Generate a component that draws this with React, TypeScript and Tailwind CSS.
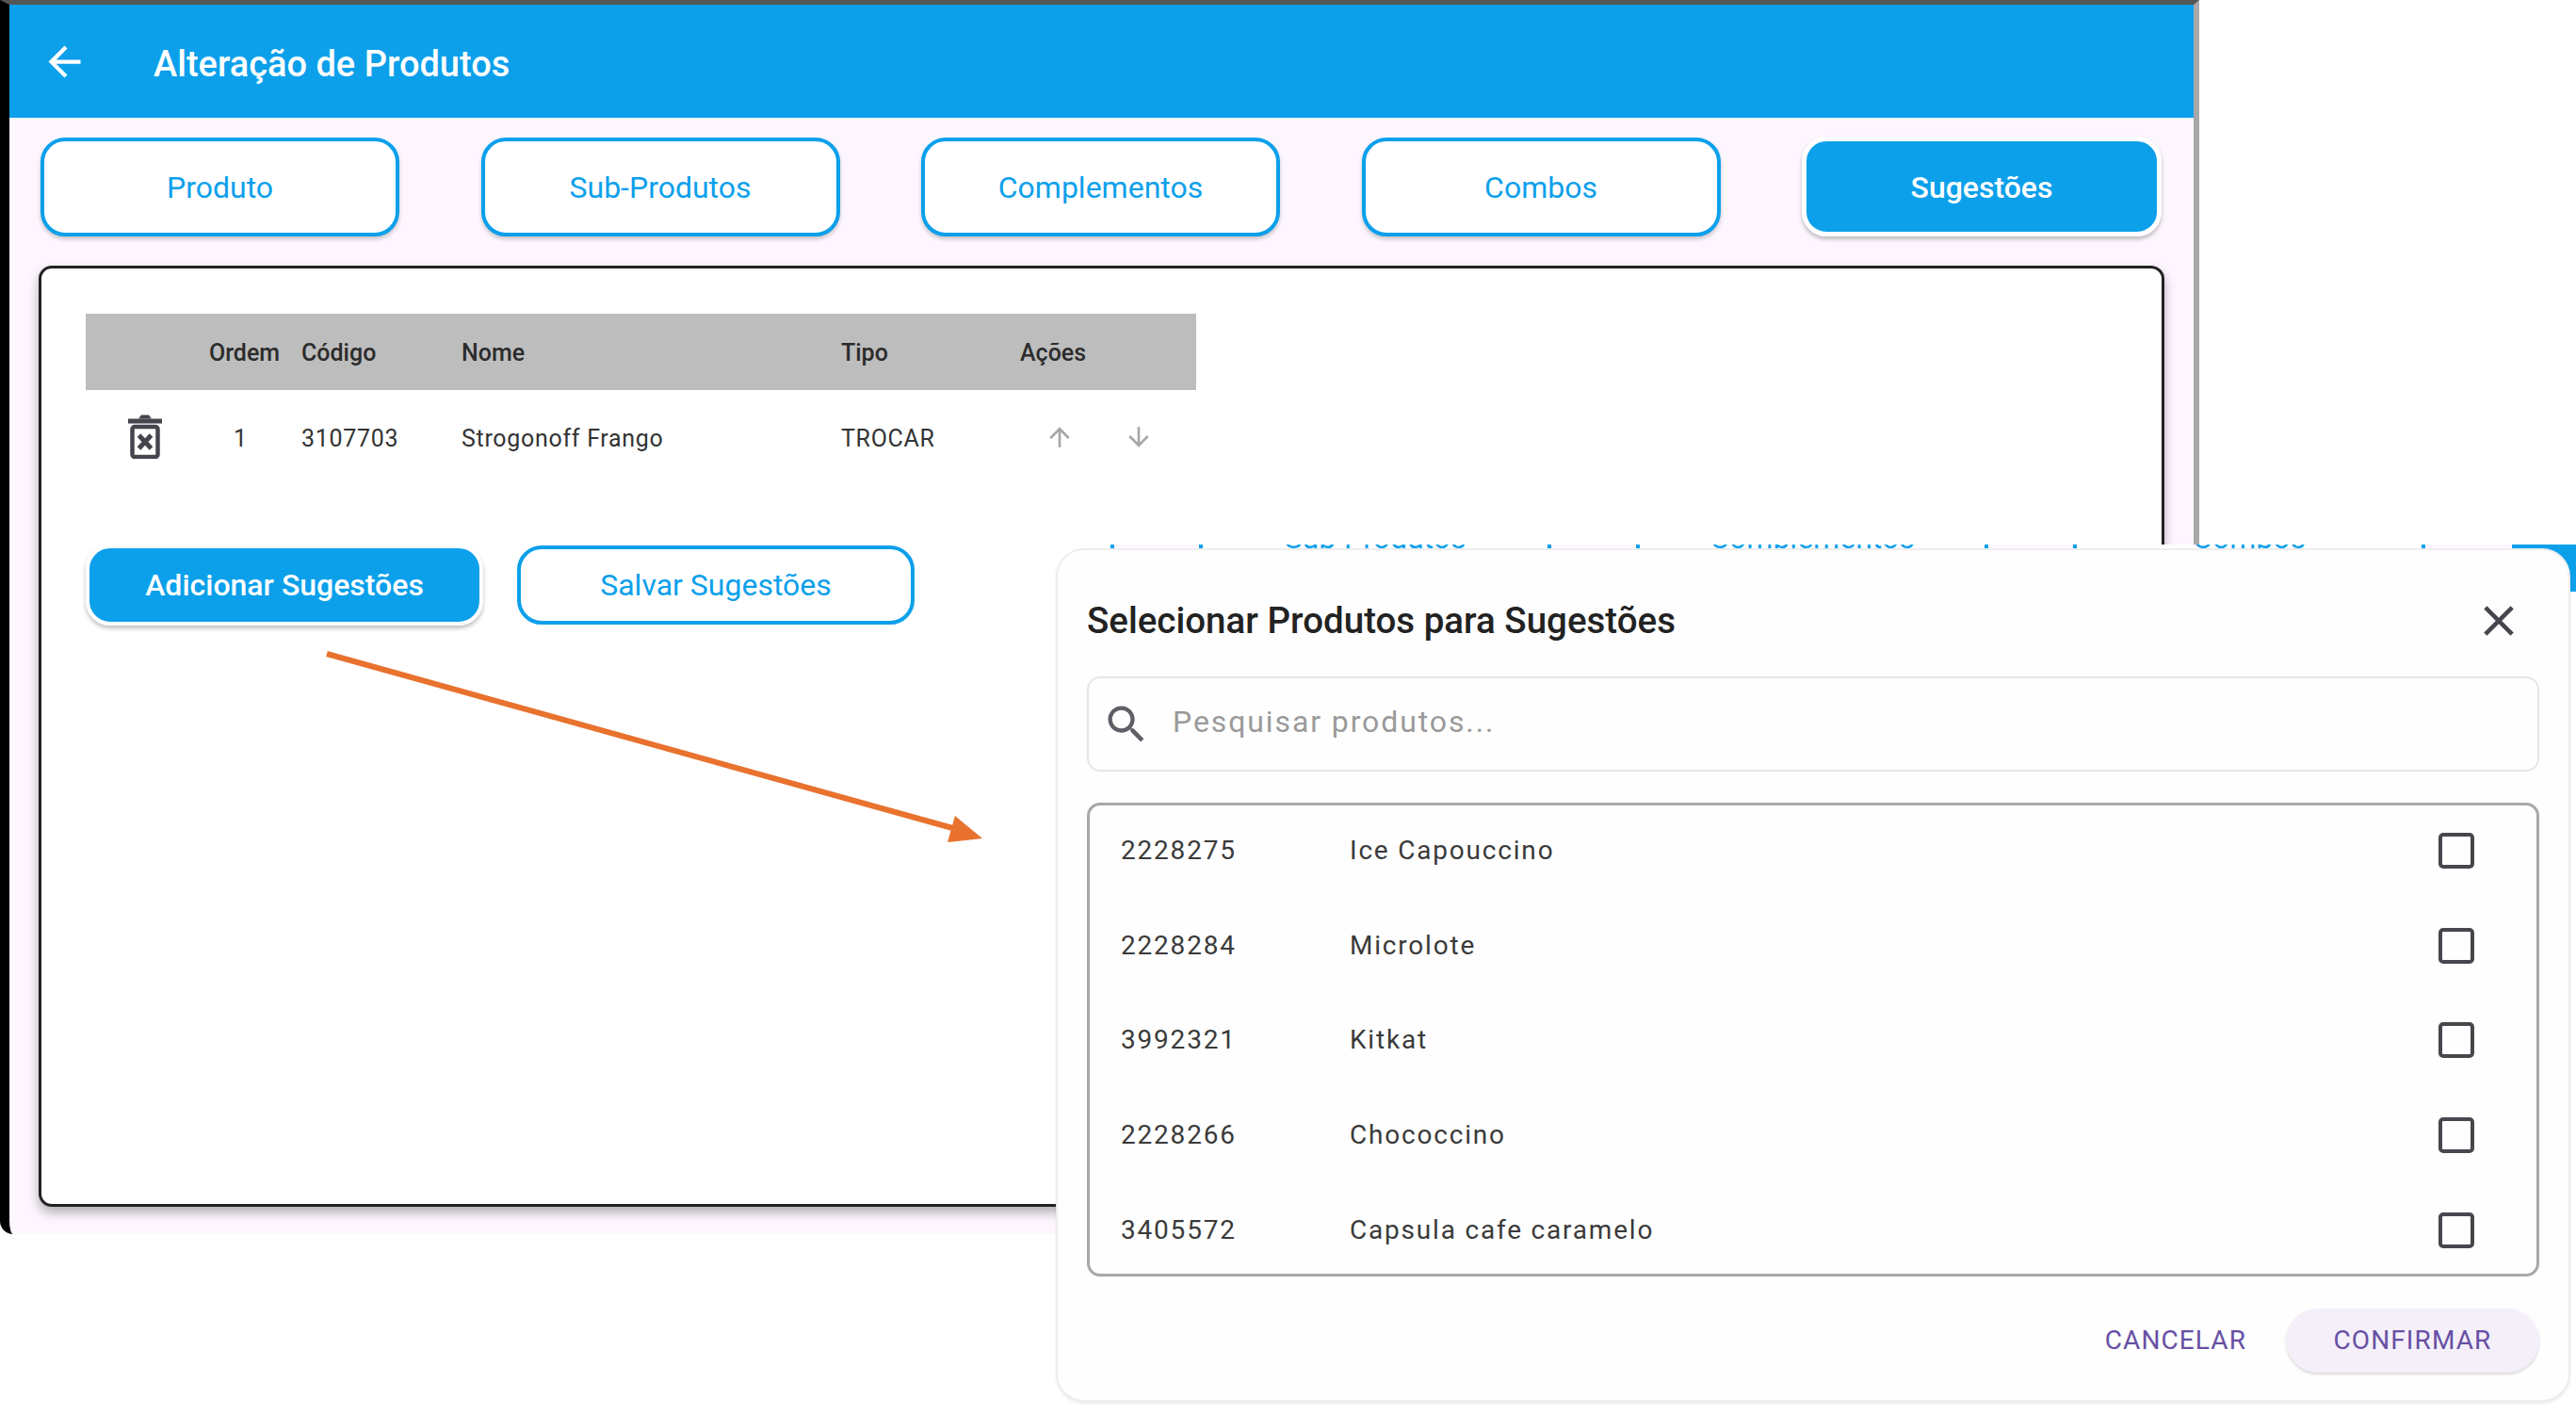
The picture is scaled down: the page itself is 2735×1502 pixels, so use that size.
const tabs = [
  { label: "Produto" },
  { label: "Sub-Produtos" },
  { label: "Complementos" },
  { label: "Combos" },
  { label: "Sugestões", active: true },
];

const products = [
  { code: "2228275", name: "Ice Capouccino" },
  { code: "2228284", name: "Microlote" },
  { code: "3992321", name: "Kitkat" },
  { code: "2228266", name: "Chococcino" },
  { code: "3405572", name: "Capsula cafe caramelo" },
];

const tableCols = "grid grid-cols-[131px_98px_170px_403px_190px_187px] items-center";

function MaterialIcon({ d, size, className }: { d: string; size: number; className?: string }) {
  return (
    <svg width={size} height={size} viewBox="0 0 24 24" fill="currentColor" className={className}>
      <path d={d} />
    </svg>
  );
}

function TrashIcon() {
  return (
    <svg width="36" height="47" viewBox="0 0 36 47" fill="none" className="text-[#45454d]">
      <path d="M11 4.5 L14 0.5 H22 L25 4.5 Z" fill="currentColor" />
      <rect x="0" y="4.5" width="36" height="5" fill="currentColor" />
      <rect x="4.5" y="13" width="27" height="32" rx="2.5" stroke="currentColor" strokeWidth="4.5" />
      <path d="M11.5 22 L24.5 36 M24.5 22 L11.5 36" stroke="currentColor" strokeWidth="5" />
    </svg>
  );
}

function TabButton({ label, active }: { label: string; active?: boolean }) {
  if (active) {
    return (
      <button className="flex h-[106px] w-[382px] items-center justify-center rounded-[26px] border-[5px] border-white bg-[#0ca0eb] pt-[2px] text-[32px] font-medium text-white shadow-[0_3px_4px_rgba(0,0,0,0.25)]">
        {label}
      </button>
    );
  }
  return (
    <button className="flex h-[105px] w-[381px] items-center justify-center rounded-[26px] border-[4px] border-[#0ca0eb] bg-white pt-[2px] text-[32px] text-[#0ca0eb] shadow-[0_3px_4px_rgba(0,0,0,0.2)]">
      {label}
    </button>
  );
}

export default function App() {
  return (
    <div className="relative h-[1502px] w-[2735px] overflow-hidden bg-white font-['Roboto',sans-serif]">
      {/* tela de trás */}
      <div className="flex h-[1310px] w-[2335px] flex-col rounded-bl-[14px] border-t-[5px] border-r-[6px] border-l-[10px] border-t-[#555] border-r-[#a8a8a8] border-l-black bg-[#fdf6fe]">
        <header className="flex h-[120px] shrink-0 items-center bg-[#0ca0eb] text-white">
          <MaterialIcon
            d="M20 11H7.83l5.59-5.59L12 4l-8 8 8 8 1.41-1.41L7.83 13H20v-2z"
            size={51}
            className="ml-[33px]"
          />
          <h1 className="mt-[6px] ml-[69px] text-[38px] font-medium">Alteração de Produtos</h1>
        </header>

        <div className="mt-[20px] flex items-center justify-between pr-[34px] pl-[33px]">
          {tabs.map((t) => (
            <TabButton key={t.label} label={t.label} active={t.active} />
          ))}
        </div>

        <main className="mt-[31px] ml-[31px] h-[999px] w-[2257px] rounded-[14px] border-[3px] border-[#222] bg-white pt-[48px] pl-[47px] shadow-[0_6px_12px_rgba(0,0,0,0.3)]">
          <div className="w-[1179px] text-[#333]">
            <div className={`${tableCols} h-[81px] bg-[#bdbdbd] pt-[2px] text-[25px] font-medium text-[#2c2c2c]`}>
              <span />
              <span>Ordem</span>
              <span>Código</span>
              <span>Nome</span>
              <span>Tipo</span>
              <span>Ações</span>
            </div>
            <div className={`${tableCols} h-[100px] text-[25px] tracking-[0.7px]`}>
              <span className="flex justify-center pr-[5px] pb-[2px]">
                <TrashIcon />
              </span>
              <span className="pt-[3px] pl-[26px]">1</span>
              <span className="pt-[3px]">3107703</span>
              <span className="pt-[3px]">Strogonoff Frango</span>
              <span className="pt-[3px]">TROCAR</span>
              <span className="flex gap-[52px] pl-[26px] text-[#a8a8a8]">
                <MaterialIcon d="M4 12l1.41 1.41L11 7.83V20h2V7.83l5.58 5.59L20 12l-8-8-8 8z" size={32} />
                <MaterialIcon d="M20 12l-1.41-1.41L13 16.17V4h-2v12.17l-5.58-5.59L4 12l8 8 8-8z" size={32} />
              </span>
            </div>
          </div>

          <div className="mt-[64px] flex items-center gap-[36px]">
            <button className="h-[86px] w-[422px] rounded-[26px] border-[4px] border-white bg-[#0ca0eb] text-[32px] font-medium text-white shadow-[0_3px_4px_rgba(0,0,0,0.25)]">
              Adicionar Sugestões
            </button>
            <button className="h-[84px] w-[422px] rounded-[26px] border-[4px] border-[#0ca0eb] bg-white text-[32px] text-[#0ca0eb]">
              Salvar Sugestões
            </button>
          </div>
        </main>
      </div>

      {/* seta laranja */}
      <svg width="720" height="210" viewBox="0 0 720 210" className="absolute top-[690px] left-[340px]" fill="none">
        <path d="M7 4 L675 190" stroke="#e8722e" strokeWidth="6" />
        <path d="M703 200 L666 204 L674 176 Z" fill="#e8722e" />
      </svg>

      {/* print colado do diálogo */}
      <div className="absolute top-[578px] left-[1121px] flex h-[924px] w-[1614px] flex-col bg-white">
        <div className="h-[6px] shrink-0 overflow-hidden">
          <div className="-mt-[30px] -ml-[312px] flex h-[36px] w-[2400px] gap-[90px] bg-[#fdf6fe]">
            {tabs.slice(0, 4).map((t) => (
              <div
                key={t.label}
                className="flex h-[36px] w-[374px] items-center justify-center border-x-[4px] border-[#0ca0eb] bg-white pt-[10px] text-[32px] leading-none text-[#0ca0eb]"
              >
                {t.label}
              </div>
            ))}
          </div>
        </div>
        <div className="absolute top-0 right-0 h-[50px] w-[68px] bg-[#0ca0eb]" />

        <section className="relative -mt-[2px] flex h-[906px] w-[1608px] flex-col rounded-[30px] border-[2px] border-[#ededed] bg-[#fefefe] px-[31px] shadow-[0_2px_3px_rgba(0,0,0,0.08)]">
          <div className="mt-[47px] flex h-[56px] items-center justify-between">
            <h2 className="text-[38.5px] font-medium text-[#222]">Selecionar Produtos para Sugestões</h2>
            <MaterialIcon
              d="M19 6.41L17.59 5 12 10.59 6.41 5 5 6.41 10.59 12 5 17.59 6.41 19 12 13.41 17.59 19 19 17.59 13.41 12z"
              size={54}
              className="mr-[16px] text-[#45454d]"
            />
          </div>

          <div className="mt-[31px] flex h-[101px] items-center rounded-[14px] border-[2px] border-[#e6e6e6] pl-[14px]">
            <MaterialIcon
              d="M15.5 14h-.79l-.28-.27C15.41 12.59 16 11.11 16 9.5 16 5.91 13.09 3 9.5 3S3 5.91 3 9.5 5.91 16 9.5 16c1.61 0 3.09-.59 4.23-1.57l.27.28v.79l5 4.99L20.49 19l-4.99-5zm-6 0C7.01 14 5 11.99 5 9.5S7.01 5 9.5 5 14 7.01 14 9.5 11.99 14 9.5 14z"
              size={52}
              className="text-[#5f5f66]"
            />
            <span className="mb-[5px] ml-[23px] text-[32px] tracking-[1.9px] text-[#9a9a9a]">Pesquisar produtos...</span>
          </div>

          <ul className="mt-[33px] flex h-[503px] flex-col gap-[4.7px] rounded-[14px] border-[3px] border-[#a8a8a8]">
            {products.map((p) => (
              <li key={p.code} className="flex h-[96px] shrink-0 items-center text-[28px] tracking-[1.8px] text-[#3a3a3a]">
                <span className="ml-[33px] w-[243px]">{p.code}</span>
                <span className="flex-1">{p.name}</span>
                <span className="mr-[66px] h-[38px] w-[38px] rounded-[5px] border-[4px] border-[#47474e]" />
              </li>
            ))}
          </ul>

          <div className="mt-[34px] flex items-center justify-end gap-[42px] text-[#6750a4]">
            <button className="text-[28px] tracking-[1.1px]">CANCELAR</button>
            <button className="h-[68px] w-[269px] rounded-full bg-[#f4eff9] text-[28px] tracking-[1.1px] shadow-[0_2px_3px_rgba(0,0,0,0.15)]">
              CONFIRMAR
            </button>
          </div>
        </section>
      </div>
    </div>
  );
}
